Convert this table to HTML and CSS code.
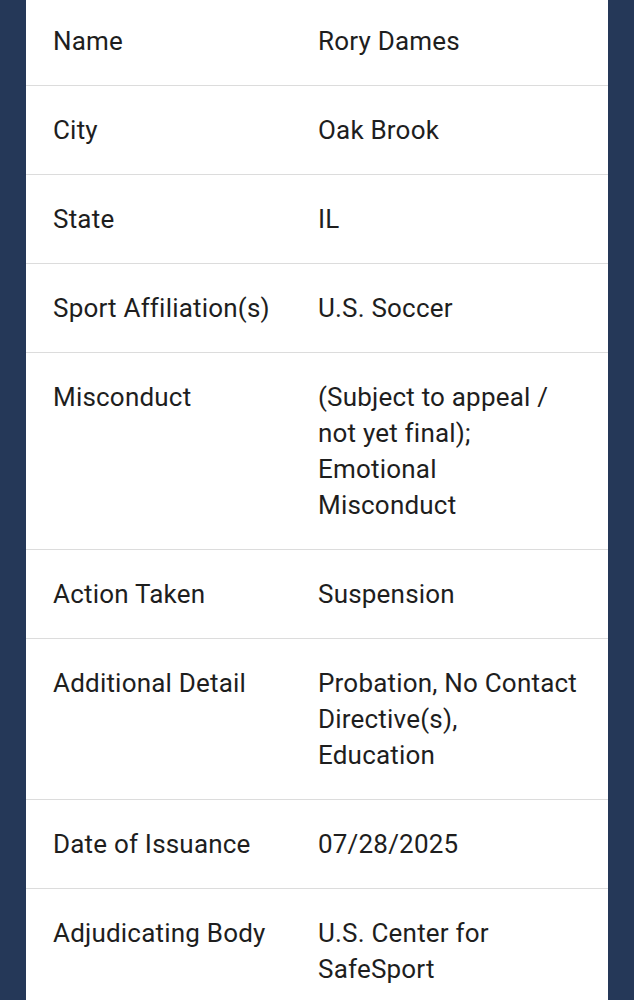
FILE: index.html
```html
<!DOCTYPE html>
<html>
<head>
<meta charset="utf-8">
<link rel="stylesheet" href="styles.css">
</head>
<body>
<div class="card">
  <div class="row"><div class="label">Name</div><div class="value">Rory Dames</div></div>
  <div class="row"><div class="label">City</div><div class="value">Oak Brook</div></div>
  <div class="row"><div class="label">State</div><div class="value">IL</div></div>
  <div class="row"><div class="label">Sport Affiliation(s)</div><div class="value">U.S. Soccer</div></div>
  <div class="row"><div class="label">Misconduct</div><div class="value">(Subject to appeal / not yet final); Emotional Misconduct</div></div>
  <div class="row"><div class="label">Action Taken</div><div class="value">Suspension</div></div>
  <div class="row"><div class="label">Additional Detail</div><div class="value">Probation, No Contact Directive(s), Education</div></div>
  <div class="row"><div class="label">Date of Issuance</div><div class="value">07/28/2025</div></div>
  <div class="row"><div class="label">Adjudicating Body</div><div class="value">U.S. Center for SafeSport</div></div>
</div>
</body>
</html>
```
FILE: styles.css
```css
html, body {
  margin: 0;
  padding: 0;
  background: #253858;
}
body {
  font-family: Roboto, "Noto Sans", sans-serif;
  font-size: 26px;
  letter-spacing: 0.2px;
  line-height: 36px;
  color: #1e1e1e;
  overflow: hidden;
}
.card {
  background: #ffffff;
  margin: -3px 26px 0 26px;
  min-height: 1100px;
}
.row {
  display: grid;
  grid-template-columns: 265px 261px;
  padding: 26px 27px 26px 27px;
  border-bottom: 1px solid #dcdcdc;
}
.label, .value {
  min-width: 0;
}
```
